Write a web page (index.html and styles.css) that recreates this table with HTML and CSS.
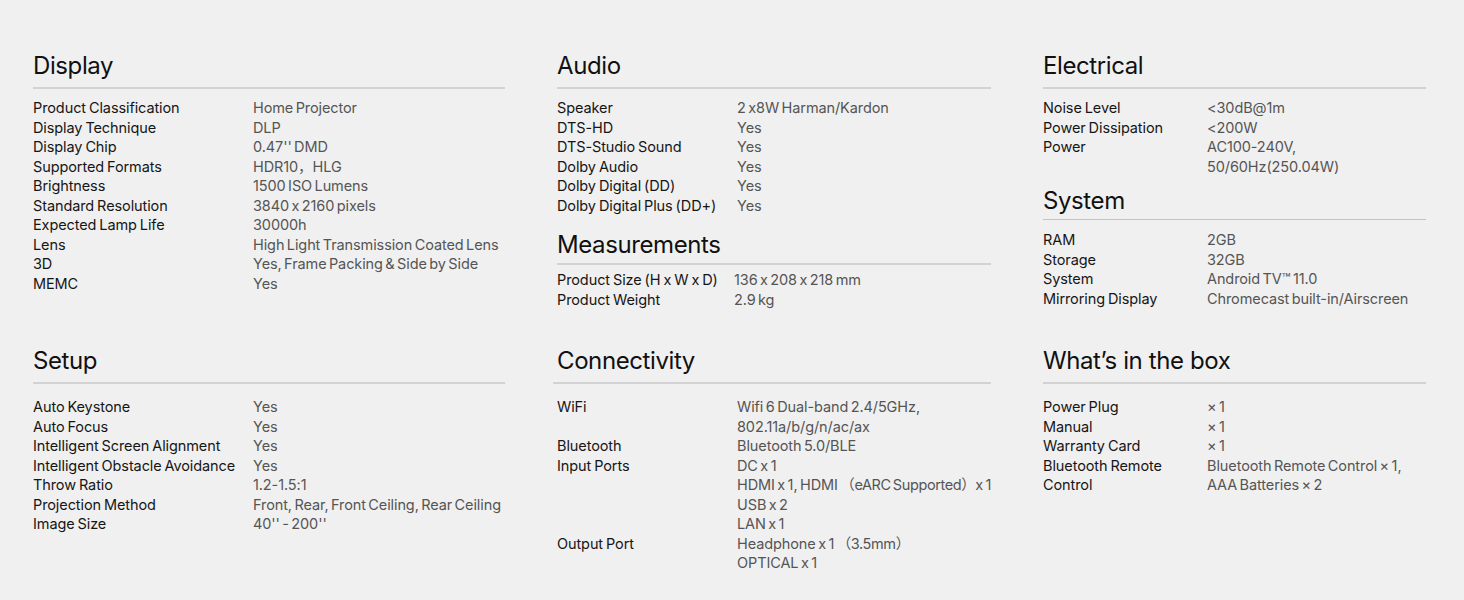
FILE: index.html
```html
<!DOCTYPE html>
<html lang="en">
<head>
<meta charset="utf-8">
<title>Specifications</title>
<link rel="stylesheet" href="styles.css">
</head>
<body>
<main class="specs">
  <div class="col col-1">
    <section class="group">
      <h2 class="group-title">Display</h2>
      <dl class="table lw-220">
        <dt>Product Classification</dt><dd>Home Projector</dd>
        <dt>Display Technique</dt><dd>DLP</dd>
        <dt>Display Chip</dt><dd>0.47'' DMD</dd>
        <dt>Supported Formats</dt><dd>HDR10，HLG</dd>
        <dt>Brightness</dt><dd>1500 ISO Lumens</dd>
        <dt>Standard Resolution</dt><dd>3840 x 2160 pixels</dd>
        <dt>Expected Lamp Life</dt><dd>30000h</dd>
        <dt>Lens</dt><dd>High Light Transmission Coated Lens</dd>
        <dt>3D</dt><dd>Yes, Frame Packing &amp; Side by Side</dd>
        <dt>MEMC</dt><dd>Yes</dd>
      </dl>
    </section>
  </div>
  <div class="col col-2">
    <section class="group">
      <h2 class="group-title">Audio</h2>
      <dl class="table lw-180">
        <dt>Speaker</dt><dd>2 x8W Harman/Kardon</dd>
        <dt>DTS-HD</dt><dd>Yes</dd>
        <dt>DTS-Studio Sound</dt><dd>Yes</dd>
        <dt>Dolby Audio</dt><dd>Yes</dd>
        <dt>Dolby Digital (DD)</dt><dd>Yes</dd>
        <dt>Dolby Digital Plus (DD+)</dt><dd>Yes</dd>
      </dl>
    </section>
    <section class="group group-sub group-measure">
      <h2 class="group-title">Measurements</h2>
      <dl class="table lw-177">
        <dt>Product Size (H x W x D)</dt><dd>136 x 208 x 218 mm</dd>
        <dt>Product Weight</dt><dd>2.9 kg</dd>
      </dl>
    </section>
  </div>
  <div class="col col-3">
    <section class="group">
      <h2 class="group-title">Electrical</h2>
      <dl class="table lw-164">
        <dt>Noise Level</dt><dd>&lt;30dB@1m</dd>
        <dt>Power Dissipation</dt><dd>&lt;200W</dd>
        <dt>Power</dt><dd>AC100-240V,<br>50/60Hz(250.04W)</dd>
      </dl>
    </section>
    <section class="group group-sub group-system">
      <h2 class="group-title">System</h2>
      <dl class="table lw-164">
        <dt>RAM</dt><dd>2GB</dd>
        <dt>Storage</dt><dd>32GB</dd>
        <dt>System</dt><dd>Android TV™ 11.0</dd>
        <dt>Mirroring Display</dt><dd>Chromecast built-in/Airscreen</dd>
      </dl>
    </section>
  </div>

  <div class="col col-1">
    <section class="group group-low">
      <h2 class="group-title">Setup</h2>
      <dl class="table lw-220">
        <dt>Auto Keystone</dt><dd>Yes</dd>
        <dt>Auto Focus</dt><dd>Yes</dd>
        <dt>Intelligent Screen Alignment</dt><dd>Yes</dd>
        <dt>Intelligent Obstacle Avoidance</dt><dd>Yes</dd>
        <dt>Throw Ratio</dt><dd>1.2-1.5:1</dd>
        <dt>Projection Method</dt><dd>Front, Rear, Front Ceiling, Rear Ceiling</dd>
        <dt>Image Size</dt><dd>40'' - 200''</dd>
      </dl>
    </section>
  </div>
  <div class="col col-2">
    <section class="group group-low group-conn">
      <h2 class="group-title">Connectivity</h2>
      <dl class="table lw-180">
        <dt>WiFi</dt><dd>Wifi 6 Dual-band 2.4/5GHz,<br>802.11a/b/g/n/ac/ax</dd>
        <dt>Bluetooth</dt><dd>Bluetooth 5.0/BLE</dd>
        <dt>Input Ports</dt><dd>DC x 1<br>HDMI x 1, HDMI <span class="fw">（eARC Supported）</span>x 1<br>USB x 2<br>LAN x 1</dd>
        <dt>Output Port</dt><dd>Headphone x 1 <span class="fw">（3.5mm）</span><br>OPTICAL x 1</dd>
      </dl>
    </section>
  </div>
  <div class="col col-3">
    <section class="group group-low">
      <h2 class="group-title">What’s in the box</h2>
      <dl class="table lw-164">
        <dt>Power Plug</dt><dd>× 1</dd>
        <dt>Manual</dt><dd>× 1</dd>
        <dt>Warranty Card</dt><dd>× 1</dd>
        <dt>Bluetooth Remote Control</dt><dd>Bluetooth Remote Control × 1,<br>AAA Batteries × 2</dd>
      </dl>
    </section>
  </div>
</main>
</body>
</html>
```

FILE: styles.css
```css
* { box-sizing: border-box; }

html, body {
  margin: 0;
  padding: 0;
  background: #f0f0f0;
}

body {
  font-family: Inter, "Liberation Sans", "Noto Sans CJK SC", sans-serif;
  color: #1c1c1c;
  -webkit-font-smoothing: antialiased;
}

.specs {
  display: grid;
  grid-template-columns: 472px 434px 383px;
  column-gap: 52px;
  row-gap: 37px;
  padding: 51px 38px 0 33px;
  width: 1464px;
}

.group-title {
  margin: 0;
  font-size: 24px;
  line-height: 30px;
  font-weight: 400;
  letter-spacing: -0.4px;
  color: #111;
  padding-bottom: 6px;
  border-bottom: 2px solid #d2d2d2;
}

.table {
  display: grid;
  margin: 9px 0 0;
  font-size: 14.5px;
  line-height: 19.5px;
}

.table dt {
  margin: 0;
  color: #161616;
  font-weight: 400;
  letter-spacing: -0.1px;
  word-spacing: -1px;
}

.table dd {
  margin: 0;
  color: #555;
  font-weight: 400;
  letter-spacing: -0.1px;
  word-spacing: -1.5px;
  white-space: nowrap;
}

.fw { letter-spacing: -0.4px; }

.lw-220 { grid-template-columns: 220px 1fr; }
.lw-180 { grid-template-columns: 180px 1fr; }
.lw-177 { grid-template-columns: 177px 1fr; }
.lw-164 { grid-template-columns: 164px 1fr; }

.group-measure { margin-top: 15px; }
.group-system { margin-top: 10px; }

.group-sub .group-title { padding-bottom: 3px; }
.group-measure .table { margin-top: 5px; }
.group-system .table { margin-top: 10px; }
.group-system .group-title { border-bottom-width: 1px; border-bottom-color: #c4c4c4; }

.group-low .table { margin-top: 13px; }
.group-conn .group-title { margin-left: -4px; padding-left: 4px; }
```
